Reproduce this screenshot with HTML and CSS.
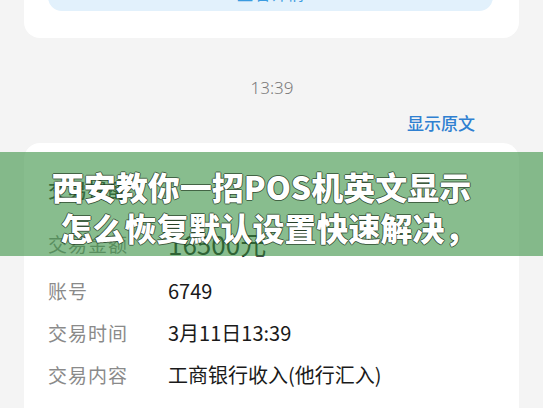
FILE: index.html
```html
<!DOCTYPE html>
<html lang="zh-CN">
<head>
    <meta charset="UTF-8">
    <meta name="viewport" content="width=device-width, initial-scale=1.0">
    <title>交易提醒</title>
    <link rel="stylesheet" href="styles.css">
</head>
<body>
    <div class="card top-card">
        <div class="action">查看详情</div>
    </div>

    <div class="time">13:39</div>
    <div class="show-orig">显示原文</div>

    <div class="card detail">
        <div class="row head"><span class="label dark">交易提醒</span></div>
        <div class="row amount"><span class="label">交易金额</span><span class="value big">16500元</span></div>
        <div class="row"><span class="label">账号</span><span class="value">6749</span></div>
        <div class="row"><span class="label">交易时间</span><span class="value">3月11日13:39</span></div>
        <div class="row"><span class="label">交易内容</span><span class="value">工商银行收入(他行汇入)</span></div>
        <div class="row"><span class="label">账户余额</span><span class="value">34743.22元</span></div>
    </div>

    <div class="banner">
        <p>西安教你一招POS机英文显示</p>
        <p class="second">怎么恢复默认设置快速解决，</p>
    </div>
</body>
</html>
```

FILE: styles.css
```css
body {
    margin: 0;
    background-color: #f4f4f4;
    font-family: "Noto Sans CJK SC", "Noto Sans", sans-serif;
    color: #1a1a1a;
    height: 408px;
    overflow: hidden;
    position: relative;
}
.card { background: #fff; margin: 0 24px; border-radius: 16px; }
.top-card { margin-top: -70px; padding: 0 26px 27px 24px; }
.action {
    height: 81px;
    background: #e2f1fc;
    border-radius: 0 0 14px 14px;
    display: flex;
    align-items: flex-end;
    justify-content: center;
    padding-bottom: 8px;
    box-sizing: border-box;
    color: #3a9be0;
    font-size: 17px;
    line-height: 20px;
}
.time { margin-top: 40px; text-align: center; font-size: 17px; line-height: 20px; color: #7a7a7a; font-family: "Noto Sans", sans-serif; font-weight: 300; padding-left: 1px; }
.show-orig { margin-top: 14px; text-align: right; padding-right: 68px; font-size: 17px; line-height: 22px; color: #2f80d1; font-weight: 500; }
.detail { margin-top: 9px; padding: 18px 0 0 24px; }
.row { display: flex; align-items: center; height: 42px; }
.row.head { height: 56px; }
.row.amount { height: 52px; }
.label { width: 120px; font-size: 19px; letter-spacing: 1px; color: #8a8a8a; }
.label.dark { color: #333; font-weight: 500; }
.value { font-size: 20px; color: #1a1a1a; }
.value.big { font-size: 26px; color: #222; }
.banner {
    position: absolute;
    left: 0;
    right: 0;
    top: 152px;
    height: 104px;
    padding: 14px 20px 0 0;
    box-sizing: border-box;
    background: rgba(56, 145, 66, 0.6);
    text-align: center;
}
.banner p {
    margin: 0;
    font-size: 32px;
    line-height: 41px;
    font-weight: 900;
    color: #fff;
    white-space: nowrap;
    text-shadow: 1px 0 0 rgba(20, 40, 20, 0.6), -1px 0 0 rgba(20, 40, 20, 0.6), 0 1px 0 rgba(20, 40, 20, 0.6), 0 -1px 0 rgba(20, 40, 20, 0.6);
}
.banner .second { padding-left: 14px; }
```
